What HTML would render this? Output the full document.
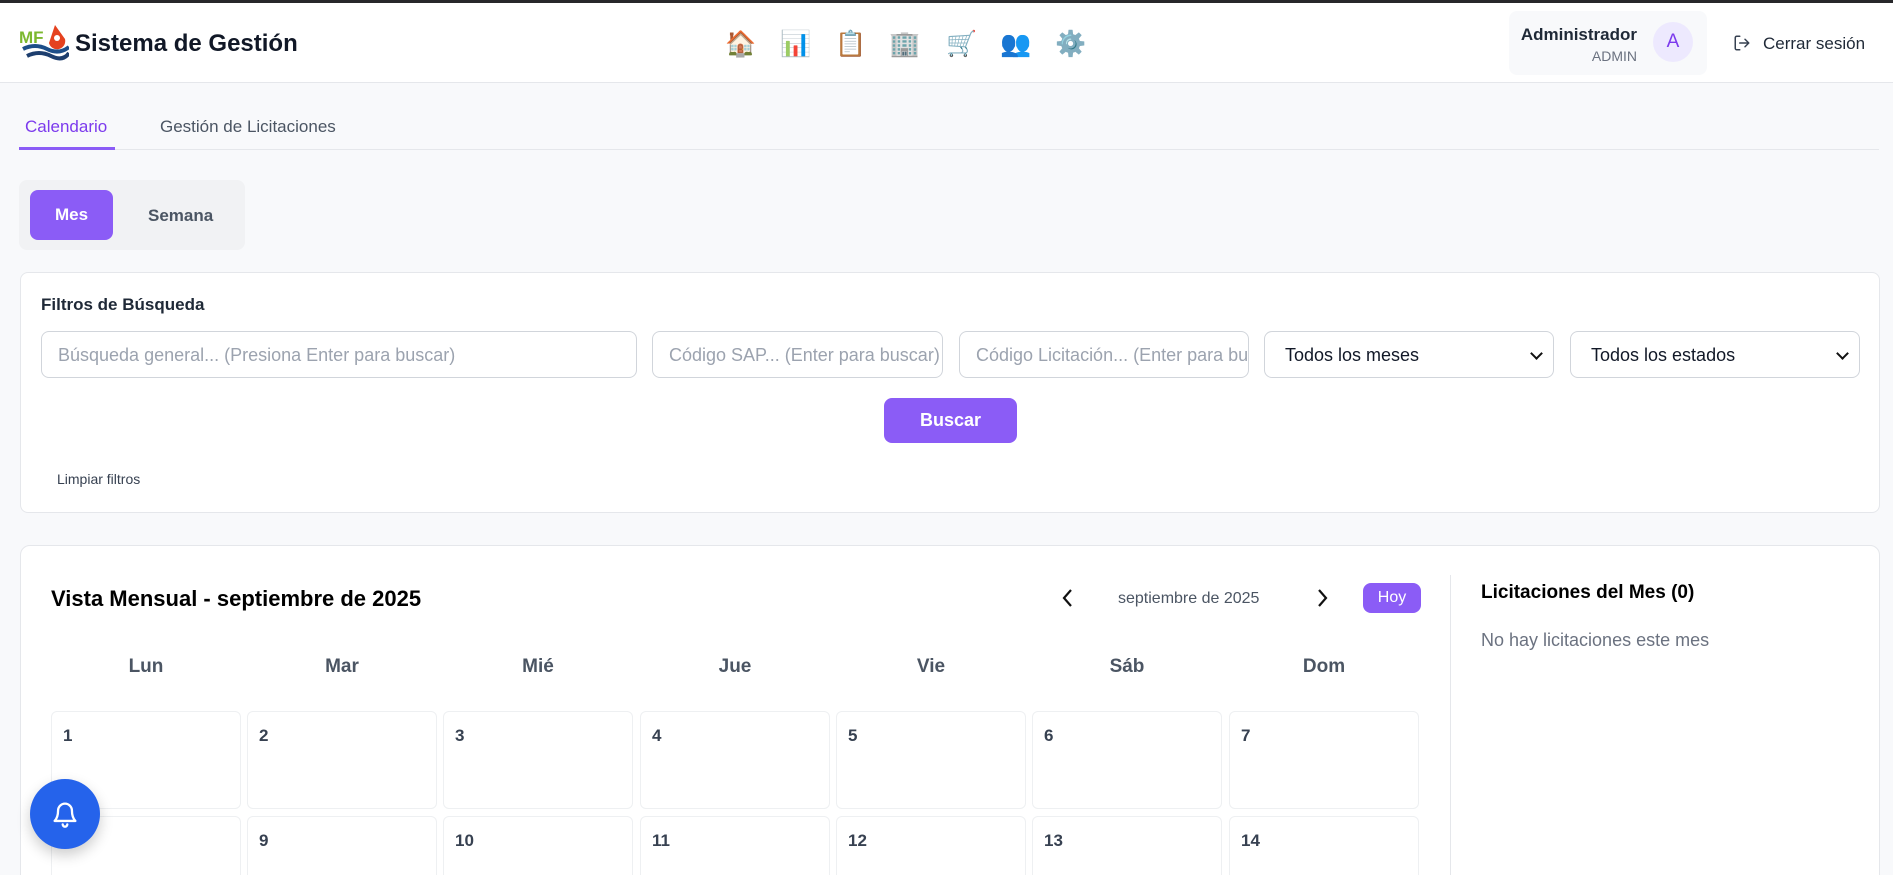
<!DOCTYPE html>
<html><head><meta charset="utf-8"><style>
*{box-sizing:border-box;margin:0;padding:0}
html,body{width:1893px;height:875px;overflow:hidden}
body{background:#f8f9fb;font-family:"Liberation Sans",sans-serif;color:#111827}
#w{position:relative;width:1893px;height:875px;overflow:hidden}
.a{position:absolute}
.top{left:0;top:0;width:1893px;height:3px;background:#27272a}
.hdr{left:0;top:3px;width:1893px;height:80px;background:#fff;border-bottom:1px solid #e5e7eb}
.ic{top:30px;font-size:25px;line-height:28px;width:30px;text-align:center}
.inp{top:331px;height:47px;border:1px solid #d1d5db;border-radius:8px;background:#fff;color:#9ca3af;font-size:18px;line-height:47px;padding-left:16px;white-space:nowrap;overflow:hidden}
.sel{color:#111827;padding-left:20px}
.sel:after{content:"";position:absolute;right:12px;top:17px;width:7px;height:7px;border-right:2px solid #111;border-bottom:2px solid #111;transform:rotate(45deg)}
.dh{top:656px;width:190px;text-align:center;font-size:19px;color:#4b5563;font-weight:bold}
.cell{width:190px;height:98px;border:1px solid #eef0f2;border-radius:6px;background:#fff;font-size:17px;font-weight:bold;color:#374151;padding:14px 0 0 11px}
</style></head><body><div id="w">
<div class="a top"></div>
<div class="a hdr"></div>
<svg class="a" style="left:19px;top:25px" width="50" height="36" viewBox="0 0 50 36">
<text x="0" y="18" font-family="Liberation Sans" font-weight="bold" font-size="17" fill="#7cb82f">MF</text>
<path d="M36 0 L46 14 A8 8 0 0 1 30 18 Z" fill="#e5421f"/><circle cx="38" cy="13" r="3" fill="#fff"/>
<path d="M4 24 Q16 18 28 24 T50 22" stroke="#1d4e89" stroke-width="4" fill="none"/>
<path d="M8 31 Q20 25 32 31 T50 28" stroke="#1d3e6e" stroke-width="4" fill="none"/>
</svg>
<div class="a" style="left:75px;top:30px;font-size:24px;font-weight:bold;color:#111827">Sistema de Gestión</div>
<div class="a ic" style="left:725px">🏠</div>
<div class="a ic" style="left:780px">📊</div>
<div class="a ic" style="left:835px">📋</div>
<div class="a ic" style="left:889px">🏢</div>
<div class="a ic" style="left:946px">🛒</div>
<div class="a ic" style="left:1000px">👥</div>
<div class="a ic" style="left:1055px">⚙️</div>
<div class="a" style="left:1509px;top:11px;width:198px;height:64px;background:#f8f9fb;border-radius:8px"></div>
<div class="a" style="left:1515px;top:25px;width:122px;text-align:right;font-size:17px;font-weight:bold;color:#1f2937">Administrador</div>
<div class="a" style="left:1520px;top:48px;width:117px;text-align:right;font-size:14px;color:#6b7280">ADMIN</div>
<div class="a" style="left:1653px;top:22px;width:40px;height:40px;border-radius:50%;background:#ede9fe;color:#7c3aed;font-size:19px;text-align:center;line-height:40px">A</div>
<svg class="a" style="left:1733px;top:34px" width="18" height="18" viewBox="0 0 24 24" fill="none" stroke="#374151" stroke-width="2" stroke-linecap="round" stroke-linejoin="round"><path d="M9 21H5a2 2 0 0 1-2-2V5a2 2 0 0 1 2-2h4"/><path d="M16 17l5-5-5-5M21 12H9"/></svg>
<div class="a" style="left:1763px;top:34px;font-size:17px;color:#1f2937">Cerrar sesión</div>

<div class="a" style="left:19px;top:149px;width:1860px;height:1px;background:#e5e7eb"></div>
<div class="a" style="left:19px;top:147px;width:96px;height:3px;background:#8b5cf6"></div>
<div class="a" style="left:25px;top:117px;font-size:17px;color:#7c3aed">Calendario</div>
<div class="a" style="left:160px;top:117px;font-size:17px;color:#4b5563">Gestión de Licitaciones</div>

<div class="a" style="left:19px;top:180px;width:226px;height:70px;background:#f1f2f4;border-radius:8px"></div>
<div class="a" style="left:30px;top:190px;width:83px;height:50px;background:#8b5cf6;border-radius:8px;color:#fff;font-weight:bold;font-size:17px;text-align:center;line-height:50px">Mes</div>
<div class="a" style="left:148px;top:206px;font-size:17px;font-weight:bold;color:#4b5563">Semana</div>

<div class="a" style="left:20px;top:272px;width:1860px;height:241px;background:#fff;border:1px solid #e5e7eb;border-radius:8px"></div>
<div class="a" style="left:41px;top:295px;font-size:17px;font-weight:bold;color:#1f2937">Filtros de Búsqueda</div>
<div class="a inp" style="left:41px;width:596px">Búsqueda general... (Presiona Enter para buscar)</div>
<div class="a inp" style="left:652px;width:291px">Código SAP... (Enter para buscar)</div>
<div class="a inp" style="left:959px;width:290px">Código Licitación... (Enter para buscar)</div>
<div class="a inp sel" style="left:1264px;width:290px">Todos los meses</div>
<div class="a inp sel" style="left:1570px;width:290px">Todos los estados</div>
<div class="a" style="left:884px;top:398px;width:133px;height:45px;background:#8b5cf6;border-radius:8px;color:#fff;font-weight:bold;font-size:18px;text-align:center;line-height:45px">Buscar</div>
<div class="a" style="left:57px;top:471px;font-size:14px;color:#374151">Limpiar filtros</div>

<div class="a" style="left:20px;top:545px;width:1860px;height:345px;background:#fff;border:1px solid #e5e7eb;border-radius:10px"></div>
<div class="a" style="left:51px;top:586px;font-size:22px;font-weight:bold;color:#000">Vista Mensual - septiembre de 2025</div>
<svg class="a" style="left:1060px;top:587px" width="16" height="22" viewBox="0 0 16 22"><path d="M11 3 L4 11 L11 19" stroke="#111" stroke-width="2.2" fill="none"/></svg>
<div class="a" style="left:1118px;top:590px;font-size:16px;color:#4b5563">septiembre de 2025</div>
<svg class="a" style="left:1314px;top:587px" width="16" height="22" viewBox="0 0 16 22"><path d="M5 3 L12 11 L5 19" stroke="#111" stroke-width="2.2" fill="none"/></svg>
<div class="a" style="left:1363px;top:583px;width:58px;height:30px;background:#8b5cf6;border-radius:8px;color:#fff;font-size:16px;text-align:center;line-height:30px">Hoy</div>
<div class="a" style="left:1450px;top:575px;width:1px;height:300px;background:#e5e7eb"></div>
<div class="a" style="left:1481px;top:582px;font-size:19px;font-weight:bold;color:#000">Licitaciones del Mes (0)</div>
<div class="a" style="left:1481px;top:630px;font-size:18px;color:#6b7280">No hay licitaciones este mes</div>

<div class="a dh" style="left:51px">Lun</div>
<div class="a dh" style="left:247px">Mar</div>
<div class="a dh" style="left:443px">Mié</div>
<div class="a dh" style="left:640px">Jue</div>
<div class="a dh" style="left:836px">Vie</div>
<div class="a dh" style="left:1032px">Sáb</div>
<div class="a dh" style="left:1229px">Dom</div>

<div class="a cell" style="left:51px;top:711px">1</div>
<div class="a cell" style="left:247px;top:711px">2</div>
<div class="a cell" style="left:443px;top:711px">3</div>
<div class="a cell" style="left:640px;top:711px">4</div>
<div class="a cell" style="left:836px;top:711px">5</div>
<div class="a cell" style="left:1032px;top:711px">6</div>
<div class="a cell" style="left:1229px;top:711px">7</div>
<div class="a cell" style="left:51px;top:816px">8</div>
<div class="a cell" style="left:247px;top:816px">9</div>
<div class="a cell" style="left:443px;top:816px">10</div>
<div class="a cell" style="left:640px;top:816px">11</div>
<div class="a cell" style="left:836px;top:816px">12</div>
<div class="a cell" style="left:1032px;top:816px">13</div>
<div class="a cell" style="left:1229px;top:816px">14</div>

<div class="a" style="left:30px;top:779px;width:70px;height:70px;border-radius:50%;background:#2563eb;box-shadow:0 6px 14px rgba(0,0,0,.2)"></div>
<svg class="a" style="left:51px;top:799px" width="28" height="30" viewBox="0 0 24 26" fill="none" stroke="#fff" stroke-width="2" stroke-linecap="round" stroke-linejoin="round"><path d="M6 10a6 6 0 0 1 12 0c0 6 2 8 3 9H3c1-1 3-3 3-9z"/><path d="M10 22a2 2 0 0 0 4 0"/></svg>
</div></body></html>
